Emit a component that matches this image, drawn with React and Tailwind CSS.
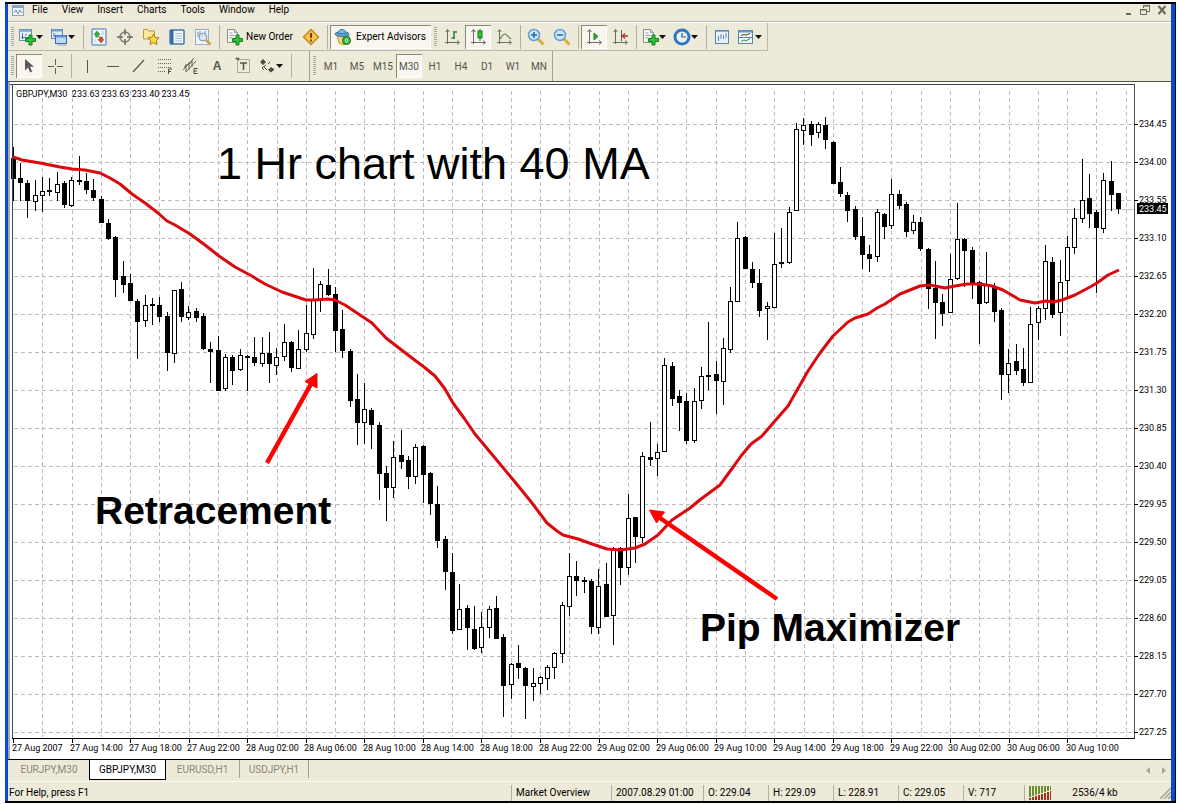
import React, { useState } from 'react';

// --- CHART DATA ---
// One row per bar: [high, body top, body bottom, low, bearish], in chart units
const CANDLES = [
  [147, 158, 179, 201, 1], [163, 178, 183, 201, 1], [180, 183, 201, 218, 1], [180, 195, 202, 211, 0],
  [177, 191, 196, 212, 0], [178, 190, 192, 196, 1], [172, 184, 193, 201, 0], [181, 183, 205, 208, 1],
  [177, 180, 206, 207, 0], [156, 180, 182, 185, 1], [173, 181, 190, 194, 1], [179, 190, 198, 201, 1],
  [196, 199, 223, 223, 1], [219, 223, 239, 240, 1], [236, 237, 280, 297, 1], [261, 276, 285, 293, 1],
  [274, 283, 301, 301, 1], [299, 301, 322, 359, 1], [295, 305, 321, 327, 0], [298, 304, 306, 325, 1],
  [297, 305, 317, 322, 1], [312, 316, 353, 371, 1], [290, 290, 354, 363, 0], [282, 289, 317, 322, 1],
  [306, 312, 318, 320, 0], [308, 311, 318, 322, 1], [313, 316, 349, 350, 1], [342, 349, 352, 383, 1],
  [336, 350, 391, 391, 1], [354, 357, 389, 391, 0], [355, 357, 371, 385, 1], [349, 355, 370, 371, 0],
  [355, 356, 358, 391, 1], [337, 357, 363, 366, 1], [337, 353, 364, 367, 0], [332, 353, 364, 383, 1],
  [348, 357, 366, 375, 0], [324, 342, 357, 361, 0], [341, 342, 368, 372, 1], [330, 349, 369, 369, 0],
  [305, 333, 350, 352, 0], [268, 300, 335, 339, 0], [281, 284, 301, 312, 0], [269, 285, 295, 296, 1],
  [287, 294, 331, 352, 1], [310, 329, 351, 358, 1], [349, 351, 401, 407, 1], [374, 399, 423, 445, 1],
  [383, 409, 423, 444, 0], [408, 410, 425, 449, 1], [422, 425, 474, 500, 1], [466, 473, 488, 521, 1],
  [441, 457, 488, 498, 0], [430, 455, 462, 469, 1], [456, 460, 477, 489, 1], [444, 447, 477, 484, 0],
  [445, 446, 475, 503, 1], [472, 473, 504, 515, 1], [486, 504, 541, 548, 1], [536, 539, 572, 590, 1],
  [553, 572, 631, 634, 1], [584, 609, 630, 630, 0], [605, 608, 628, 650, 1], [606, 629, 649, 650, 1],
  [612, 627, 648, 653, 0], [606, 609, 628, 638, 0], [596, 608, 639, 639, 1], [634, 637, 686, 717, 1],
  [663, 664, 685, 699, 0], [645, 663, 668, 679, 1], [667, 668, 686, 719, 1], [668, 683, 687, 701, 0],
  [676, 677, 684, 694, 0], [665, 667, 679, 690, 0], [652, 653, 668, 679, 0], [602, 605, 654, 663, 0],
  [553, 576, 607, 616, 0], [561, 576, 581, 596, 1], [577, 580, 582, 593, 1], [579, 581, 627, 634, 1],
  [569, 586, 628, 634, 0], [563, 584, 617, 617, 1], [547, 548, 616, 645, 0], [547, 548, 568, 585, 1],
  [494, 518, 568, 575, 0], [517, 517, 537, 563, 1], [452, 456, 538, 543, 0], [422, 457, 460, 466, 1],
  [444, 452, 459, 476, 0], [358, 365, 452, 452, 0], [362, 366, 399, 406, 1], [390, 396, 403, 431, 1],
  [393, 401, 441, 444, 1], [388, 401, 441, 443, 0], [367, 376, 401, 409, 0], [322, 375, 377, 390, 1],
  [361, 374, 381, 414, 1], [338, 348, 382, 405, 0], [287, 301, 350, 353, 0], [222, 238, 302, 302, 0],
  [236, 237, 269, 269, 1], [262, 269, 283, 288, 1], [269, 283, 311, 317, 1], [302, 306, 309, 340, 0],
  [233, 264, 308, 308, 0], [228, 262, 264, 268, 1], [207, 212, 263, 264, 0], [123, 129, 211, 211, 0],
  [118, 125, 131, 145, 0], [121, 124, 135, 146, 1], [122, 124, 133, 138, 0], [117, 125, 140, 149, 1],
  [141, 142, 184, 184, 1], [167, 182, 194, 197, 1], [192, 195, 211, 222, 1], [206, 209, 237, 240, 1],
  [217, 236, 255, 269, 1], [245, 254, 259, 272, 1], [209, 212, 257, 262, 0], [213, 214, 227, 239, 1],
  [179, 194, 226, 229, 0], [190, 194, 206, 209, 1], [202, 204, 232, 237, 1], [215, 222, 231, 234, 0],
  [217, 222, 249, 251, 1], [248, 249, 289, 309, 1], [261, 288, 303, 339, 1], [294, 302, 314, 326, 1],
  [254, 279, 313, 313, 0], [203, 239, 279, 280, 0], [238, 239, 251, 287, 1], [247, 250, 283, 299, 1],
  [281, 282, 304, 344, 1], [252, 285, 303, 304, 0], [283, 286, 312, 322, 1], [308, 310, 375, 400, 1],
  [349, 363, 375, 393, 0], [344, 361, 371, 375, 1], [348, 369, 383, 386, 1], [307, 324, 383, 383, 0],
  [306, 308, 323, 340, 0], [245, 261, 309, 320, 0], [257, 262, 315, 318, 1], [260, 282, 313, 336, 0],
  [236, 247, 281, 297, 0], [208, 218, 248, 254, 0], [159, 200, 219, 223, 0], [174, 198, 214, 228, 1],
  [210, 212, 228, 293, 1], [173, 180, 229, 233, 0], [161, 181, 195, 211, 1], [193, 193, 209, 214, 1],
];

const MOVING_AVERAGE =
  '13,157 22,160 40,163 60,167 72,169 85,170 100,173 110,178 120,184 132,194 145,203 158,213 167,221 175,225 190,234 ' +
  '205,245 219,256 235,267 250,275 265,284 282,292 300,298 306,300 315,300 328,299 335,300 345,305 357,313 372,323 ' +
  '386,338 408,355 424,367 435,376 445,389 453,403 464,418 475,434 495,458 515,482 532,503 547,523 557,531 563,535 ' +
  '578,539 592,544 607,549 620,550 635,548 645,544 658,535 672,520 690,508 701,499 720,485 731,470 741,456 751,444 ' +
  '762,436 774,422 788,406 796,392 808,371 820,353 833,336 848,322 855,318 868,314 877,308 885,304 900,294 920,286 ' +
  '930,285 945,288 955,286 967,284 980,284 992,286 1003,290 1020,300 1035,303 1046,301 1053,302 1062,300 1075,295 ' +
  '1090,287 1097,283 1108,275 1119,270';

const PRICES = [
  '234.45', '234.00', '233.55', '233.10', '232.65', '232.20', '231.75', '231.30', '230.85',
  '230.40', '229.95', '229.50', '229.05', '228.60', '228.15', '227.70', '227.25',
];

const TIMES = [
  '27 Aug 2007', '27 Aug 14:00', '27 Aug 18:00', '27 Aug 22:00', '28 Aug 02:00', '28 Aug 06:00', '28 Aug 10:00',
  '28 Aug 14:00', '28 Aug 18:00', '28 Aug 22:00', '29 Aug 02:00', '29 Aug 06:00', '29 Aug 10:00', '29 Aug 14:00',
  '29 Aug 18:00', '29 Aug 22:00', '30 Aug 02:00', '30 Aug 06:00', '30 Aug 10:00',
];

const MENUS = ['File', 'View', 'Insert', 'Charts', 'Tools', 'Window', 'Help'];
const PERIODS = ['M1', 'M5', 'M15', 'M30', 'H1', 'H4', 'D1', 'W1', 'MN'];

// --- ICONS ---
const Icon = ({ children }) => (
  <svg viewBox="0 0 18 18" className="w-[18px] h-[18px] shrink-0" fill="none">{children}</svg>
);

const Plus = () => (
  <path d="M11 7h3v3.500h3.500v3H14V17h-3v-3.500H7.500v-3H11z" fill="#2fc435" stroke="#11801b" strokeWidth="1" />
);

const ChartPlus = () => (
  <Icon>
    <rect x="1.500" y="1.500" width="12" height="11" fill="#e8f3fc" stroke="#6c93b8" />
    <path d="M2 3h11" stroke="#8ab4dc" strokeWidth="2" />
    <path d="M4.500 5v6M3 9.500h8M7 7.500l2-1.500" stroke="#55789a" />
    <Plus />
  </Icon>
);

const Profiles = () => (
  <Icon>
    <rect x="1.500" y="1.500" width="11" height="9" fill="#dcebf9" stroke="#5f8cba" />
    <path d="M2 2.500h10" stroke="#6fa3d8" strokeWidth="2" />
    <path d="M4 5v4M4 8h4" stroke="#55789a" />
    <rect x="5.500" y="7.500" width="11" height="8" fill="#b9d7f2" stroke="#3c6fa8" />
    <path d="M6 8.500h10" stroke="#5d94d0" strokeWidth="2" />
    <path d="M7 17h9.500" stroke="#90a4b8" />
  </Icon>
);

const MarketWatch = () => (
  <Icon>
    <rect x="2" y="1" width="14" height="16" rx="1" fill="#f2f8fd" stroke="#6d9ecb" strokeWidth="1.500" />
    <path d="M7 3l3 3.500H8.500V9h-3V6.500H4z" fill="#35ad3b" stroke="#1d7d24" strokeWidth="0.500" />
    <path d="M11 15l-3-3.500h1.500V9h3v2.500H14z" fill="#dd4a2e" stroke="#a02c18" strokeWidth="0.500" />
    <path d="M11 4h3M11 6h3M4 12h2M4 14h3" stroke="#b7cbdd" />
  </Icon>
);

const Crosshair = () => (
  <Icon>
    <circle cx="9" cy="9" r="5" stroke="#7d7d76" strokeWidth="1.500" />
    <path d="M9 1v6M9 11v6M1 9h6M11 9h6" stroke="#6b6b66" strokeWidth="1.500" />
  </Icon>
);

const Navigator = () => (
  <Icon>
    <path d="M1.500 4V1.500h4l1 1.500h6v8h-11z" fill="#fbe99b" stroke="#b9994a" />
    <path d="M11.500 6l1.700 3.400 3.800.5-2.700 2.700.6 3.900-3.400-1.800-3.400 1.800.6-3.900L6 9.900l3.800-.5z" fill="#ffd83e" stroke="#a97a18" />
  </Icon>
);

const Terminal = () => (
  <Icon>
    <rect x="2" y="2" width="14" height="14" rx="1" fill="#f4f9fe" stroke="#3f77b5" strokeWidth="1.500" />
    <path d="M4 2v14" stroke="#3567a5" strokeWidth="3" />
    <path d="M7 5.500h7M7 8h7M7 10.500h7M7 13h7" stroke="#a9bfd6" />
  </Icon>
);

const Tester = () => (
  <Icon>
    <rect x="1.500" y="1.500" width="13" height="15" fill="#eef5fb" stroke="#8fb0cf" />
    <path d="M4 4v5M6 3v5M8.500 5v4M11 3v5" stroke="#7290ad" />
    <circle cx="9" cy="9" r="4" fill="#cfe5f6" fillOpacity="0.8" stroke="#8298ac" />
    <path d="M12 12l4.500 4.500" stroke="#d6a03c" strokeWidth="2.500" />
  </Icon>
);

const PagePlus = () => (
  <Icon>
    <path d="M2.500 1.500h7l3 3v10h-10z" fill="#f4f6f4" stroke="#8a8f8a" />
    <path d="M9.500 1.500v3h3M4.500 5h3M4.500 7.500h5M4.500 10h3" stroke="#9aa29a" />
    <Plus />
  </Icon>
);

const Diamond = () => (
  <Icon>
    <path d="M9 1.500L16.500 9 9 16.500 1.500 9z" fill="#f5c64a" stroke="#c48b1c" strokeWidth="1.500" />
    <path d="M9 5v5M9 11.500V13.500" stroke="#7b3c10" strokeWidth="2" />
  </Icon>
);

const Expert = () => (
  <Icon>
    <path d="M3 7l2 8 5 2 4-4 1-6z" fill="#f1d568" stroke="#bc9c35" />
    <ellipse cx="8" cy="6" rx="7" ry="2.500" fill="#5fa4d6" stroke="#3878ac" />
    <path d="M4 5.500C4 0 12 0 12 5.500z" fill="#79b9e4" stroke="#3878ac" />
    <circle cx="12.500" cy="12.500" r="4" fill="#2fae35" stroke="#18781f" />
    <path d="M12.500 10.500a1.200 2 0 1 0 .1 0z" stroke="#fff" />
  </Icon>
);

const Axes = () => <path d="M4.500 2v14M2 14.500h14M2.500 4l2-2.500 2 2.500M14 12.500l2.500 2-2.500 2" stroke="#6c6c65" />;

const BarChart = () => (
  <Icon><Axes /><path d="M11 3v8M11 4h3M8.500 10H11" stroke="#2e7d32" strokeWidth="1.500" /></Icon>
);

const CandleChart = () => (
  <Icon><Axes /><path d="M11 1v12" stroke="#177a1f" /><rect x="9" y="3" width="4" height="7" fill="#2fc03b" stroke="#177a1f" /></Icon>
);

const LineChart = () => (
  <Icon><Axes /><path d="M5 11c2-3 3-5 5-5s3 3 6 5" stroke="#4d8a4d" strokeWidth="1.200" /></Icon>
);

const Zoom = ({ plus }) => (
  <Icon>
    <path d="M11 11l5.500 5.500" stroke="#d9ae3d" strokeWidth="3" />
    <circle cx="7" cy="7" r="5.500" fill="#cbe6fb" stroke="#5f9dd4" strokeWidth="1.500" />
    <path d="M4 7h6" stroke="#2464a6" strokeWidth="1.500" />
    {plus && <path d="M7 4v6" stroke="#2464a6" strokeWidth="1.500" />}
  </Icon>
);

const AutoScroll = () => (
  <Icon><Axes /><path d="M9 5v7l4-3.500z" fill="#2fa838" stroke="#23812a" /></Icon>
);

const ChartShift = () => (
  <Icon><Axes /><path d="M10.500 2v11" stroke="#555" /><path d="M17 8h-5M14 5.500L11.500 8 14 10.500" stroke="#b3372c" strokeWidth="1.300" /></Icon>
);

const Clock = () => (
  <Icon>
    <circle cx="9" cy="9" r="7" fill="#e6f3fd" stroke="#2f76bf" strokeWidth="3" />
    <path d="M9 5v4h4" stroke="#33567c" strokeWidth="1.200" />
  </Icon>
);

const TemplateA = () => (
  <Icon>
    <rect x="2.500" y="2.500" width="13" height="13" fill="#e6f1f8" stroke="#5b87a6" />
    <path d="M3 3.500h12" stroke="#8db4d1" />
    <path d="M5.500 8v5M8 6v5M10.500 7v4M13 5v5" stroke="#64869c" />
  </Icon>
);

const TemplateB = () => (
  <Icon>
    <rect x="1.500" y="2.500" width="14" height="13" fill="#eef5fa" stroke="#5b87a6" />
    <path d="M2 3.500h13" stroke="#5d9bd0" strokeWidth="2" />
    <path d="M2 9.500h13" stroke="#5b87a6" />
    <path d="M4 7.500l3-1 2 .5 4-1.500" stroke="#7a3528" />
    <path d="M4 13.500l3-1.500 2 1 4-2.500" stroke="#3a8b4a" />
  </Icon>
);

const Cursor = () => (
  <Icon><path d="M5 2v11.500l3-3 2.200 5 2-.9-2.200-4.800h4z" fill="#5a5a5a" /></Icon>
);

const Cross = () => (
  <Icon><path d="M9.500 2v6M9.500 11v6M2 9.500h6M11 9.500h6" stroke="#5f5f5a" /></Icon>
);

const Fibo = () => (
  <Icon>
    <path d="M2 2.500h13M2 6.500h13M2 10.500h13M2 14.500h8" stroke="#66665f" strokeDasharray="1 1" />
    <path d="M12.500 17v-5H16M12.500 14.500H15" stroke="#4a4a45" />
  </Icon>
);

const Channel = () => (
  <Icon>
    <path d="M1 13L12 1M4 15L14 4M4 7v8M7 5v8M10 3v7M2 10l8-5" stroke="#66665f" />
    <path d="M15.500 11.500h-3.500v5h3.500M12 14h3" stroke="#4a4a45" />
  </Icon>
);

const LabelBox = () => (
  <Icon>
    <rect x="3.500" y="2.500" width="12" height="13" stroke="#66665f" strokeDasharray="1 1" />
    <path d="M6 6h7M9.500 6v7M1.500 1.500h3v2" stroke="#55554f" strokeWidth="1.500" />
  </Icon>
);

const Arrows = () => (
  <Icon>
    <path d="M5 2l3 3-3 3-3-3zM13 10l3.500 2.500L13 15.500 10 13z" fill="#4b4b46" />
    <path d="M8 8l-4 3 2 2M10 7l2-2M6 10l3 3" stroke="#4b4b46" />
  </Icon>
);

const Caret = () => (
  <svg viewBox="0 0 7 4" className="w-[7px] h-1 shrink-0"><path d="M0 0h7L3.500 4z" fill="#111" /></svg>
);

// --- TOOLBAR PIECES ---
function Tool({ label, pressed, menu, children }) {
  return (
    <button
      aria-label={label}
      className={`${menu ? 'w-8 pl-[2px]' : 'w-[26px] justify-center'} h-6 shrink-0 flex items-center text-[12px] text-[#55554f] ${
        pressed ? 'bg-[#f8f6ee] shadow-[inset_1px_1px_0_#8d8a7d,inset_-1px_-1px_0_#ffffff]' : ''
      }`}
    >
      {children}
      {menu && <Caret />}
    </button>
  );
}

const Sep = () => (
  <div className="w-[6px] shrink-0 flex justify-center"><div className="w-px h-6 bg-[#b3b0a2]" /></div>
);

const Grip = () => (
  <div className="w-2 shrink-0 flex justify-center">
    <div className="w-[3px] h-5 bg-[repeating-linear-gradient(#a5a295_0_1px,#f6f3e6_1px_2px)]" />
  </div>
);

function Chart() {
  return (
    <svg viewBox="8 82 1163 677" className="block w-full h-auto bg-white" role="img" aria-label="GBPJPY M30">
      {/* Grid */}
      <g stroke="#bdbdbd" strokeDasharray="4 3" shapeRendering="crispEdges">
        {Array.from({ length: 38 }, (_, i) => {
          const x = Math.round(42.3 + i * 29.28) + 0.5;
          return <line key={i} x1={x} x2={x} y1="91" y2="737" />;
        })}
        {PRICES.map((p, i) => <line key={p} x1="14" x2="1133" y1={124.5 + i * 38} y2={124.5 + i * 38} />)}
      </g>
      <path d="M13 209H1134" stroke="#c4c8c4" strokeWidth="1" shapeRendering="crispEdges" />

      {/* Bars */}
      <g stroke="#000" shapeRendering="crispEdges">
        {CANDLES.map(([high, top, bottom, low, bear], i) => {
          const x = Math.round(12.8 + i * 7.32) + 0.5;
          return (
            <g key={i}>
              <line x1={x} x2={x} y1={high} y2={low} />
              <rect x={x - 2} y={top + 0.5} width="4" height={Math.max(bottom - top - 1, 1)} fill={bear ? '#000' : '#fff'} />
            </g>
          );
        })}
      </g>

      <polyline points={MOVING_AVERAGE} fill="none" stroke="#d9090f" strokeWidth="3" strokeLinejoin="round" />

      {/* Frame and axes */}
      <path d="M9 82V759" stroke="#a8a8b4" strokeWidth="2" />
      <path d="M10 84.500H1134M12.500 84V738" stroke="#4a4048" />
      <path d="M1134.500 84V738" stroke="#55554f" strokeWidth="1" />
      <path d="M12 738.500H1135" stroke="#000" />
      <g className="font-['Roboto',sans-serif] text-[9px]">
        <text x="16" y="97">GBPJPY,M30&#160; 233.63 233.63 233.40 233.45</text>
        {PRICES.map((p, i) => (
          <g key={p}>
            <path d={`M1134 ${124.5 + i * 38}h4`} stroke="#000" />
            <text x="1139" y={127 + i * 38}>{p}</text>
          </g>
        ))}
        <rect x="1137" y="203" width="31" height="11" />
        <text x="1139" y="212" fill="#fff">233.45</text>
        {TIMES.map((t, i) => (
          <g key={t}>
            <path d={`M${Math.round(13 + i * 58.56) + 0.5} 738v5`} stroke="#000" />
            <text x={Math.round(11.5 + i * 58.56)} y="751">{t}</text>
          </g>
        ))}
      </g>

      {/* Notes */}
      <g className="font-['Liberation_Sans',Arial,sans-serif]">
        <text x="217" y="179" className="text-[45px]">1 Hr chart with 40 MA</text>
        <text x="95" y="524" className="text-[39px] font-bold">Retracement</text>
        <text x="700" y="641" className="text-[39px] font-bold">Pip Maximizer</text>
      </g>
      <g stroke="#f00" fill="#f00">
        <path d="M267 463L311 384" strokeWidth="4.500" />
        <path d="M317 373.500v14.500l-12-6.500z" strokeWidth="1" />
        <path d="M777 599L660 518" strokeWidth="4.500" />
        <path d="M649.500 510l15 2-8 11z" strokeWidth="1" />
      </g>
    </svg>
  );
}

export default function App() {
  const [period, setPeriod] = useState('M30');
  const [tab, setTab] = useState('GBPJPY,M30');

  return (
    <div className="min-h-screen bg-white pl-[5px] pr-[3px] py-[2px] font-['Roboto',sans-serif] text-[10px] text-black">
      <div className="border-y-2 border-r border-black">
        <div className="border-l-[3px] border-r-4 border-[#0a48d8] bg-[#eeead9]">
          {/* Menu */}
          <nav className="h-[18px] flex items-start border-b border-[#bcb9ab]">
            <div className="w-[17px] flex justify-end">
              <svg viewBox="0 0 14 14" className="w-3.5 h-3.5" fill="none">
                <rect x="1.500" y="1.500" width="11" height="10" fill="#edf4fa" stroke="#8ba5bd" />
                <path d="M2 3h10" stroke="#7aa6d2" strokeWidth="2" />
                <path d="M3 9l2-3 2 4 2-4 2 3" stroke="#7e8894" />
              </svg>
            </div>
            {MENUS.map(m => <button key={m} className="px-[7px] leading-3">{m}</button>)}
            <div className="ml-auto flex items-start gap-[5px] pr-[3px] text-[#66665f]">
              <button aria-label="Minimize" className="flex w-3">
                <svg viewBox="0 0 12 14" className="w-3 h-3.5"><path d="M4 10h5" stroke="currentColor" strokeWidth="2" /></svg>
              </button>
              <button aria-label="Restore" className="flex w-3">
                <svg viewBox="0 0 12 14" className="w-3 h-3.5" fill="none" stroke="currentColor"><path d="M4.500 4V1.500h6v6H8M4 2h7M1.500 5.500h6v5h-6zM1 6h7" /></svg>
              </button>
              <button aria-label="Close" className="flex w-3">
                <svg viewBox="0 0 12 14" className="w-3 h-3.5" stroke="currentColor" strokeWidth="2"><path d="M2.500 2l7 8M9.500 2l-7 8" /></svg>
              </button>
            </div>
          </nav>

          {/* Standard toolbar */}
          <div className="flex h-[29px] border-t border-white">
            <div className="flex items-center border-b border-r border-[#bcb9ab]">
              <Grip />
              <Tool label="New chart" menu><ChartPlus /></Tool>
              <Tool label="Profiles" menu><Profiles /></Tool>
              <Sep />
              <Tool label="Market Watch"><MarketWatch /></Tool>
              <Tool label="Data Window"><Crosshair /></Tool>
              <Tool label="Navigator"><Navigator /></Tool>
              <Tool label="Terminal"><Terminal /></Tool>
              <Tool label="Strategy Tester"><Tester /></Tool>
              <Sep />
              <button className="w-[76px] h-6 shrink-0 flex items-center gap-[3px] pl-[3px] whitespace-nowrap"><PagePlus />New Order</button>
              <Tool label="MetaEditor"><Diamond /></Tool>
              <Sep />
              <button className="w-[101px] h-6 shrink-0 flex items-center gap-1 pl-1 whitespace-nowrap bg-[#f8f6ee] shadow-[inset_1px_1px_0_#8d8a7d,inset_-1px_-1px_0_#ffffff]">
                <Expert />Expert Advisors
              </button>
              <Grip />
              <Tool label="Bar chart"><BarChart /></Tool>
              <Tool label="Candlesticks" pressed><CandleChart /></Tool>
              <Tool label="Line chart"><LineChart /></Tool>
              <Sep />
              <Tool label="Zoom in"><Zoom plus /></Tool>
              <Tool label="Zoom out"><Zoom /></Tool>
              <Sep />
              <Tool label="Auto scroll" pressed><AutoScroll /></Tool>
              <Tool label="Chart shift"><ChartShift /></Tool>
              <Sep />
              <Tool label="Indicators" menu><PagePlus /></Tool>
              <Tool label="Periodicity" menu><Clock /></Tool>
              <Sep />
              <Tool label="Templates"><TemplateA /></Tool>
              <Tool label="Tile windows" menu><TemplateB /></Tool>
            </div>
          </div>

          {/* Line studies and periods */}
          <div className="flex h-[31px] border-b border-[#55554f]">
            <div className="w-[302px] shrink-0 flex items-center border-r border-[#a5a295]">
              <Grip />
              <Tool label="Cursor" pressed><Cursor /></Tool>
              <Tool label="Crosshair"><Cross /></Tool>
              <Sep />
              <Tool label="Vertical line"><Icon><path d="M9.500 3v13" stroke="#55554f" /></Icon></Tool>
              <Tool label="Horizontal line"><Icon><path d="M3 9.500h12" stroke="#55554f" /></Icon></Tool>
              <Tool label="Trendline"><Icon><path d="M3 15L14 3" stroke="#55554f" strokeWidth="1.200" /></Icon></Tool>
              <Tool label="Fibonacci"><Fibo /></Tool>
              <Tool label="Channel"><Channel /></Tool>
              <Tool label="Text"><span className="font-['Liberation_Sans'] font-bold">A</span></Tool>
              <Tool label="Label"><LabelBox /></Tool>
              <Tool label="Arrows" menu><Arrows /></Tool>
              <Sep />
            </div>
            <div className="flex items-center border-r border-[#a5a295]">
              <Grip />
              {PERIODS.map(p => (
                <button
                  key={p}
                  onClick={() => setPeriod(p)}
                  className={`w-[26px] h-6 shrink-0 text-center text-[#55554f] ${
                    p === period ? 'bg-[#f8f6ee] shadow-[inset_1px_1px_0_#8d8a7d,inset_-1px_-1px_0_#ffffff]' : ''
                  }`}
                >
                  {p}
                </button>
              ))}
            </div>
          </div>

          <Chart />

          {/* Chart tabs */}
          <div className="flex h-[22px] items-start border-t border-black pl-px">
            {[['EURJPY,M30', 'w-20'], ['GBPJPY,M30', 'w-[77px]'], ['EURUSD,H1', 'w-[74px]'], ['USDJPY,H1', 'w-[69px]']].map(([name, width], i) => (
              <button
                key={name}
                onClick={() => setTab(name)}
                className={`${width} shrink-0 text-center leading-5 ${
                  name === tab ? 'h-5 bg-white border-x border-b border-black' : 'h-[18px] text-[#8a877a]'
                } ${i > 1 ? 'border-r border-[#a5a295]' : ''}`}
              >
                {name}
              </button>
            ))}
            <div className="ml-auto flex h-5 items-center gap-2 pr-[3px]">
              <button aria-label="Scroll left" className="flex w-2 justify-center"><svg viewBox="0 0 4 7" className="w-1 h-[7px]"><path d="M4 0v7L0 3.500z" fill="#aaa79a" /></svg></button>
              <button aria-label="Scroll right" className="flex w-2 justify-center"><svg viewBox="0 0 4 7" className="w-1 h-[7px]"><path d="M0 0v7l4-3.500z" fill="#aaa79a" /></svg></button>
            </div>
          </div>

          {/* Status bar */}
          <footer className="flex h-5 items-end border-t border-[#faf8f0] leading-4 whitespace-nowrap">
            <div className="flex-1 pl-px">For Help, press F1</div>
            <div className="w-[100px] pl-1 border-l border-[#b3b0a2]">Market Overview</div>
            <div className="w-[92px] pl-1 border-l border-[#b3b0a2]">2007.08.29 01:00</div>
            <div className="w-[65px] pl-1 border-l border-[#b3b0a2]">O: 229.04</div>
            <div className="w-[65px] pl-1 border-l border-[#b3b0a2]">H: 229.09</div>
            <div className="w-[65px] pl-1 border-l border-[#b3b0a2]">L: 228.91</div>
            <div className="w-[65px] pl-1 border-l border-[#b3b0a2]">C: 229.05</div>
            <div className="w-[61px] pl-1 border-l border-[#b3b0a2]">V: 717</div>
            <div className="w-[147px] h-4 pl-1 flex items-center border-l border-[#b3b0a2]">
              <svg viewBox="0 0 22 14" className="w-[22px] h-3.5">
                {Array.from({ length: 8 }, (_, i) => (
                  <g key={i}>
                    <rect x={i * 3} y="0" width="2" height={11 - i} fill="#6f8f2c" />
                    <rect x={i * 3} y={12 - i} width="2" height={2 + i} fill="#a3301c" />
                  </g>
                ))}
              </svg>
              <span className="flex-1 pr-5 text-center">2536/4 kb</span>
              <svg viewBox="0 0 12 12" className="w-3 h-3"><path d="M1 12L12 1M5 12l7-7M9 12l3-3" stroke="#a5a295" strokeWidth="1.500" /></svg>
            </div>
          </footer>
        </div>
      </div>
    </div>
  );
}
